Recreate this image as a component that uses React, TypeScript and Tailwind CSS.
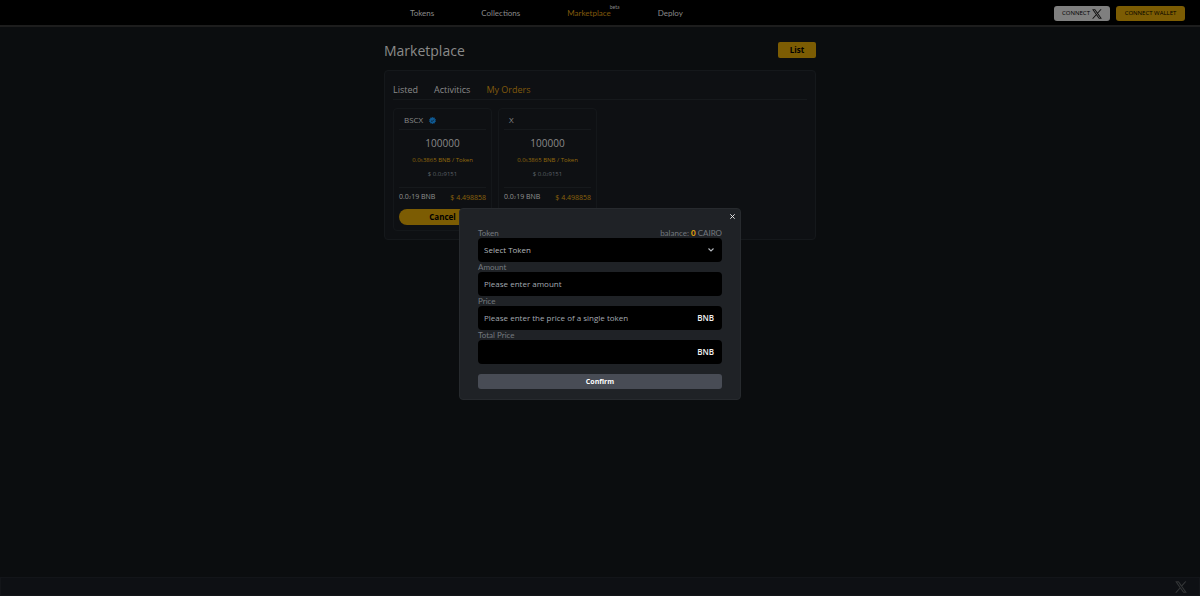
import React from "react";

const orders = [
  { name: "BSCX", verified: true },
  { name: "X", verified: false },
];

function XLogo({ className }: { className: string }) {
  return (
    <svg viewBox="0 0 24 24" className={className} fill="currentColor" stroke="currentColor" strokeWidth="0.5" aria-hidden="true">
      <path d="M14.1 10.3 22.3 1h-2l-7.1 8.1L7.6 1H1l8.6 12.3L1 23h2l7.5-8.6 6 8.6H23zm-2.7 3-.9-1.2L3.7 2.5h3l5.5 7.8.9 1.2 7.2 10.1h-3z" />
    </svg>
  );
}

function Verified() {
  return (
    <svg viewBox="0 0 24 24" className="h-[7px] w-[7px]" role="img" aria-label="Verified">
      <path
        fill="#0f5a94"
        d="M12 0l3 2.5 4-.6 1 3.9 3.4 2.1L22 12l1.4 4.1L20 18.2l-1 3.9-4-.6-3 2.5-3-2.5-4 .6-1-3.9-3.4-2.1L2 12 .6 7.9 4 5.8l1-3.9 4 .6z"
      />
      <path d="M7 12.5l3.5 3.5 6.5-7" fill="none" stroke="#0e1115" strokeWidth="2.5" />
    </svg>
  );
}

function Zeros({ count }: { count: number }) {
  return <span className="text-[4px]">{count}</span>;
}

function OrderCard({ name, verified }: { name: string; verified: boolean }) {
  return (
    <article className="flex w-[99px] flex-col rounded border border-[#14171a] px-[5px] pb-[5px]">
      <div className="flex h-[21px] items-center gap-1.5 border-b border-[#16191c] px-[5px] pt-0.5 text-[8px] text-[#8a8a8a]">
        {name}
        {verified && <Verified />}
      </div>
      <div className="flex flex-col items-center pt-[6px]">
        <div className="text-[10px] leading-[14px] text-[#8a8a8a]">100000</div>
        <div className="mt-1 h-3 text-[6px] leading-[12px] text-[#946a0c]">
          0.0<Zeros count={5} />3865 BNB / Token
        </div>
        <div className="mt-0.5 h-3 text-[6px] leading-[12px] text-[#5c6168]">
          $ 0.0<Zeros count={2} />9151
        </div>
      </div>
      <div className="mt-[7px] flex h-[18px] items-center justify-between border-t border-[#16191c] pt-0.5 text-[7px] leading-[14px] whitespace-nowrap">
        <span className="text-[#929292]">
          0.0<Zeros count={2} />19 BNB
        </span>
        <span className="text-[#8a620c]">$ 4.498858</span>
      </div>
      <button className="mt-1 h-4 rounded-full bg-[#7c5c03] text-[8px] leading-4 font-bold text-black">Cancel</button>
    </article>
  );
}

const label = "flex h-2.5 items-center justify-between font-['Lato',sans-serif] text-[8px] leading-[10px] text-[#74797f]";
const field = "flex h-6 items-center rounded bg-black px-1.5 text-[8px] text-[#b4b8be]";
const input = "min-w-0 flex-1 bg-transparent outline-none placeholder:text-[#a4aab2]";

function ListDialog() {
  return (
    <div className="fixed inset-0 flex items-start justify-center pt-[208px]">
      <form
        role="dialog"
        aria-label="List token"
        className="relative w-[282px] rounded border border-[#272a2e] bg-[#1f2226] px-[18px] pt-[19px] pb-2.5"
      >
        <button type="button" aria-label="Close" className="absolute top-[3px] right-[3px] p-px text-[#e8e8e8]">
          <svg viewBox="0 0 8 8" className="h-[7px] w-[7px]" stroke="currentColor" strokeWidth="1.1">
            <path d="M1.5 1.5l5 5M6.5 1.5l-5 5" />
          </svg>
        </button>
        <div className={label}>
          <label htmlFor="token">Token</label>
          <span>
            balance: <b className="text-[#e9a80c]">0</b> CAIRO
          </span>
        </div>
        <div className={field}>
          <select id="token" className="min-w-0 flex-1 appearance-none bg-transparent outline-none">
            <option>Select Token</option>
          </select>
          <svg viewBox="0 0 8 8" className="mr-px h-2 w-2" fill="none" stroke="currentColor" strokeWidth="1.1">
            <path d="M1.5 2.5L4 5l2.5-2.5" />
          </svg>
        </div>
        <div className={label}>
          <label htmlFor="amount">Amount</label>
        </div>
        <div className={field}>
          <input id="amount" className={input} placeholder="Please enter amount" />
        </div>
        <div className={label}>
          <label htmlFor="price">Price</label>
        </div>
        <div className={field}>
          <input id="price" className={input} placeholder="Please enter the price of a single token" />
          <span className="pr-0.5 font-semibold text-[#f0f0f0]">BNB</span>
        </div>
        <div className={label}>
          <label htmlFor="total">Total Price</label>
        </div>
        <div className={field}>
          <input id="total" className={input} readOnly />
          <span className="pr-0.5 font-semibold text-[#f0f0f0]">BNB</span>
        </div>
        <button type="submit" className="mt-2.5 block h-[15px] w-full rounded-[3px] bg-[#484c55] text-[7px] leading-[15px] font-bold text-white">
          Confirm
        </button>
      </form>
    </div>
  );
}

export default function App() {
  return (
    <div className="flex min-h-screen flex-col bg-[#0b0d0f] font-['Open_Sans','Noto_Sans',sans-serif]">
      <header className="grid h-[27px] grid-cols-[1fr_432px_1fr] items-center border-b-2 border-[#1d1d1d] bg-black text-[8px] text-[#8a8a8a]">
        <span />
        <nav className="flex gap-[47px] pt-px pl-[26px] font-['Lato',sans-serif]">
          <a href="#tokens">Tokens</a>
          <a href="#collections">Collections</a>
          <a href="#marketplace" className="relative text-[#80590c]">
            Marketplace
            <sup className="absolute top-0 left-full -mt-0.5 -ml-px text-[5px] leading-none text-[#8a8a8a]">beta</sup>
          </a>
          <a href="#deploy">Deploy</a>
        </nav>
        <div className="flex justify-end gap-1.5 pt-0.5 pr-[15px] text-[6px] text-black">
          <button className="flex h-[15px] w-14 items-center justify-center gap-0.5 rounded-[3px] bg-[#7f7f7f]">
            CONNECT <XLogo className="h-2.5 w-2.5" />
          </button>
          <button className="h-[15px] w-[69px] rounded-[3px] bg-[#7c5c03] whitespace-nowrap">CONNECT WALLET</button>
        </div>
      </header>

      <main className="mx-auto w-[432px] flex-1 pt-[15px]">
        <div className="flex h-4 items-center justify-between">
          <h1 className="text-[14px] text-[#8a8a8a]">Marketplace</h1>
          <button className="h-4 w-[38px] rounded-xs bg-[#7c5c03] text-[8px] font-bold text-black">List</button>
        </div>
        <section className="mt-3 rounded border border-[#15181b] bg-[#0e1013] px-2 pt-[9px] pb-2">
          <div className="flex h-5 gap-4 border-b border-[#16191c] text-[9px] leading-[18px] text-[#8a8a8a]">
            <button>Listed</button>
            <button>Activitics</button>
            <button className="text-[#80590c]">My Orders</button>
          </div>
          <div className="mt-2 flex gap-1.5">
            {orders.map((o) => (
              <OrderCard key={o.name} name={o.name} verified={o.verified} />
            ))}
          </div>
        </section>
      </main>

      <footer className="flex h-[19px] items-center justify-end border border-[#131519] bg-[#0e1014] pr-3">
        <a href="#x" aria-label="X" className="text-[#3a3b3d]">
          <XLogo className="h-3 w-3" />
        </a>
      </footer>

      <ListDialog />
    </div>
  );
}
